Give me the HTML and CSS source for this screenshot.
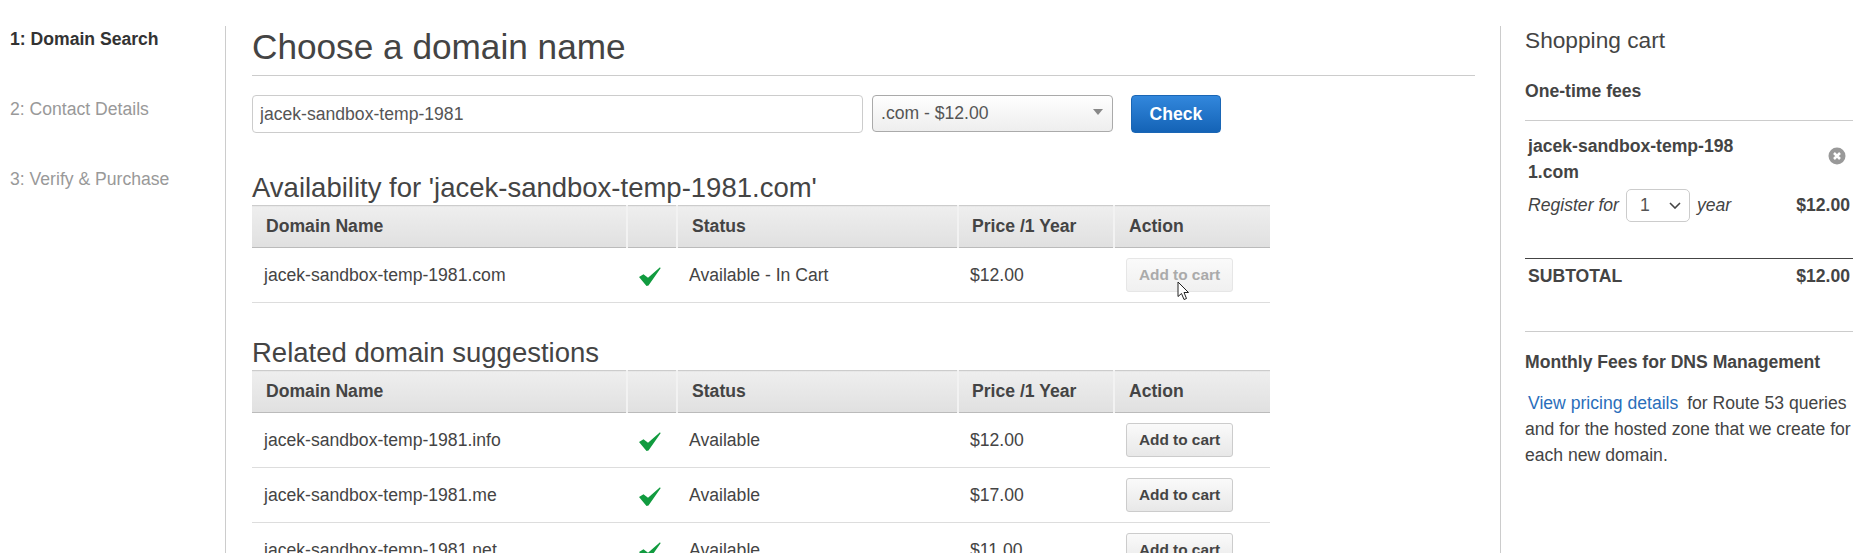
FILE: index.html
```html
<!DOCTYPE html>
<html>
<head>
  <title>Choose a domain name</title>
  <link rel="stylesheet" href="styles.css">
</head>
<body>
  <div class="page">
    <!-- Steps -->
    <ul class="steps">
      <li class="step current">1: Domain Search</li>
      <li class="step">2: Contact Details</li>
      <li class="step">3: Verify &amp; Purchase</li>
    </ul>

    <div class="main">
      <h1 class="title">Choose a domain name</h1>

      <div class="search-row">
        <input class="domain-input" type="text" value="jacek-sandbox-temp-1981">
        <div class="tld-select">
          <span>.com - $12.00</span>
          <span class="tld-arrow"></span>
        </div>
        <button class="check-btn">Check</button>
      </div>

      <h2 class="section-title first">Availability for 'jacek-sandbox-temp-1981.com'</h2>
      <table class="domains">
        <thead>
          <tr>
            <th class="col-name">Domain Name</th>
            <th class="col-icon"></th>
            <th class="col-status">Status</th>
            <th class="col-price">Price /1 Year</th>
            <th class="col-action">Action</th>
          </tr>
        </thead>
        <tbody>
          <tr>
            <td>jacek-sandbox-temp-1981.com</td>
            <td class="check-cell"><svg class="tick" viewBox="0 0 22 19"><path d="M0 10 L4.5 7.3 L9 10.7 L21 0.3 L21.6 1.2 L9.5 18.5 L7.5 19 Z"/></svg></td>
            <td>Available - In Cart</td>
            <td>$12.00</td>
            <td class="action-cell">
              <button class="cart-btn" disabled>Add to cart</button>
              <svg class="pointer" viewBox="0 0 13 20"><path d="M1 1 V15.5 L4.5 12.5 L7 18.5 L9.5 17.5 L7 11.5 L11.5 11.5 Z"/></svg>
            </td>
          </tr>
        </tbody>
      </table>

      <h2 class="section-title">Related domain suggestions</h2>
      <table class="domains">
        <thead>
          <tr>
            <th class="col-name">Domain Name</th>
            <th class="col-icon"></th>
            <th class="col-status">Status</th>
            <th class="col-price">Price /1 Year</th>
            <th class="col-action">Action</th>
          </tr>
        </thead>
        <tbody>
          <tr>
            <td>jacek-sandbox-temp-1981.info</td>
            <td class="check-cell"><svg class="tick" viewBox="0 0 22 19"><path d="M0 10 L4.5 7.3 L9 10.7 L21 0.3 L21.6 1.2 L9.5 18.5 L7.5 19 Z"/></svg></td>
            <td>Available</td>
            <td>$12.00</td>
            <td class="action-cell"><button class="cart-btn">Add to cart</button></td>
          </tr>
          <tr>
            <td>jacek-sandbox-temp-1981.me</td>
            <td class="check-cell"><svg class="tick" viewBox="0 0 22 19"><path d="M0 10 L4.5 7.3 L9 10.7 L21 0.3 L21.6 1.2 L9.5 18.5 L7.5 19 Z"/></svg></td>
            <td>Available</td>
            <td>$17.00</td>
            <td class="action-cell"><button class="cart-btn">Add to cart</button></td>
          </tr>
          <tr>
            <td>jacek-sandbox-temp-1981.net</td>
            <td class="check-cell"><svg class="tick" viewBox="0 0 22 19"><path d="M0 10 L4.5 7.3 L9 10.7 L21 0.3 L21.6 1.2 L9.5 18.5 L7.5 19 Z"/></svg></td>
            <td>Available</td>
            <td>$11.00</td>
            <td class="action-cell"><button class="cart-btn">Add to cart</button></td>
          </tr>
        </tbody>
      </table>
    </div>

    <!-- Shopping cart -->
    <div class="cart">
      <h3 class="cart-title">Shopping cart</h3>
      <div class="fees-title">One-time fees</div>

      <div class="cart-item">
        <div class="item-top">
          <div class="item-name">jacek-sandbox-temp-1981.com</div>
          <svg class="remove" viewBox="0 0 18 18">
            <circle cx="9" cy="9" r="8.5"/>
            <path d="M6 6 L12 12 M12 6 L6 12"/>
          </svg>
        </div>
        <div class="item-term">
          <em>Register for</em>
          <div class="year-select">
            <span>1</span>
            <svg class="chevron" viewBox="0 0 12 7"><path d="M1 1 L6 6 L11 1"/></svg>
          </div>
          <em>year</em>
          <strong class="item-price">$12.00</strong>
        </div>
      </div>

      <div class="subtotal">
        <span>SUBTOTAL</span>
        <span>$12.00</span>
      </div>

      <div class="monthly">
        <div class="monthly-title">Monthly Fees for DNS Management</div>
        <p class="monthly-text"><a class="pricing-link" href="#">View pricing details</a> for Route 53 queries and for the hosted zone that we create for each new domain.</p>
      </div>
    </div>
  </div>
</body>
</html>
```

FILE: styles.css
```css
html, body {
  height: 553px;
  overflow: hidden;
}

body {
  margin: 0;
  background-color: #fff;
  color: #444;
  font-family: "Liberation Sans", Arial, sans-serif;
  font-size: 17.6px;
}

.page {
  display: flex;
  padding-top: 26px;
  height: 527px;
}

/* Steps */
.steps {
  list-style-type: none;
  margin: 0;
  padding: 4px 0 0 10px;
  width: 215px;
  border-right: 1px solid #ccc;
}

.step {
  height: 70px;
  line-height: 18px;
  color: #999;
}

.step.current {
  color: #333;
  font-weight: bold;
}

/* Main column */
.main {
  width: 1223px;
  padding: 0 25px 0 26px;
  border-right: 1px solid #ccc;
}

.title {
  margin: 0;
  height: 49px;
  line-height: 42px;
  font-size: 35.2px;
  font-weight: normal;
  border-bottom: 1px solid #ccc;
}

.search-row {
  display: flex;
  margin-top: 19px;
}

.domain-input {
  box-sizing: border-box;
  width: 611px;
  height: 38px;
  padding: 0 7px;
  border: 1px solid #ccc;
  border-radius: 4px;
  color: #555;
  font-family: inherit;
  font-size: 17.6px;
}

.tld-select {
  box-sizing: border-box;
  display: flex;
  justify-content: space-between;
  align-items: center;
  width: 241px;
  height: 37px;
  margin-left: 9px;
  padding: 0 9px 1px 8px;
  border: 1px solid #aaa;
  border-radius: 4px;
  background: linear-gradient(#fff, #f6f6f6 50%, #eee);
  color: #555;
}

.tld-arrow {
  width: 0;
  height: 0;
  margin-bottom: 3px;
  border-left: 5px solid transparent;
  border-right: 5px solid transparent;
  border-top: 6px solid #888;
}

.check-btn {
  width: 90px;
  height: 38px;
  margin-left: 18px;
  border: 1px solid #1a66b5;
  border-radius: 4px;
  background: linear-gradient(#3287dc, #1463b6);
  color: #fff;
  font-family: inherit;
  font-size: 17.6px;
  font-weight: bold;
}

.section-title {
  margin: 33px 0 0;
  height: 34px;
  line-height: 34px;
  font-size: 27.5px;
  font-weight: normal;
}

.section-title.first {
  margin-top: 38px;
}

/* Domain tables */
.domains {
  width: 1018px;
  table-layout: fixed;
  border-collapse: collapse;
}

.domains th {
  box-sizing: border-box;
  height: 42px;
  padding: 0 0 0 14px;
  border-top: 1px solid #ccc;
  border-bottom: 1px solid #bbb;
  border-right: 2px solid #f2f2f2;
  background: linear-gradient(#eee, #e0e0e0);
  color: #444;
  text-align: left;
  font-weight: bold;
}

.domains th:last-child {
  border-right: none;
}

.col-name { width: 375px; }
.col-icon { width: 50px; }
.col-status { width: 281px; }
.col-price { width: 156px; }
.col-action { width: 156px; }

.domains th.col-price {
  padding-left: 13px;
}

.domains td {
  height: 54px;
  padding: 0 0 0 12px;
  border-bottom: 1px solid #ddd;
}

.check-cell svg {
  display: block;
  margin-top: 2px;
}

.tick {
  width: 22px;
  height: 19px;
  fill: #119b3f;
}

.action-cell {
  position: relative;
}

.cart-btn {
  display: block;
  width: 107px;
  height: 34px;
  padding: 0;
  border: 1px solid #ccc;
  border-radius: 3px;
  background: linear-gradient(#fafafa, #e8e8e8);
  color: #444;
  font-family: inherit;
  font-size: 15.4px;
  font-weight: bold;
}

.cart-btn:disabled {
  border-color: #e6e6e6;
  background: linear-gradient(#fafafa, #f0f0f0);
  color: #aaa;
}

/* mouse pointer in the screenshot, sits over the button */
.pointer {
  position: absolute;
  left: 63px;
  top: 33px;
  width: 13px;
  height: 20px;
  fill: #fff;
  stroke: #222;
  stroke-width: 1;
}

/* Cart */
.cart {
  width: 328px;
  margin-left: 24px;
}

.cart-title {
  margin: 0;
  height: 28px;
  line-height: 28px;
  font-size: 22.7px;
  font-weight: normal;
}

.fees-title {
  margin-top: 28px;
  line-height: 18px;
  font-weight: bold;
}

.cart-item {
  margin-top: 20px;
  height: 139px;
  padding: 0 3px;
  border-top: 1px solid #ccc;
  border-bottom: 1px solid #444;
  box-sizing: border-box;
}

.item-top {
  display: flex;
  justify-content: space-between;
  align-items: center;
  padding-top: 12px;
}

.item-name {
  width: 210px;
  line-height: 26px;
  font-weight: bold;
  word-break: break-all;
}

.remove {
  width: 18px;
  height: 18px;
  margin: 0 4px 7px 0;
}

.remove circle {
  fill: #999;
}

.remove path {
  stroke: #fff;
  stroke-width: 2.5;
}

.item-term {
  display: flex;
  align-items: center;
  margin-top: 4px;
}

.year-select {
  box-sizing: border-box;
  display: flex;
  justify-content: space-between;
  align-items: center;
  width: 64px;
  height: 33px;
  margin: 0 7px;
  padding: 0 8px 0 13px;
  border: 1px solid #ccc;
  border-radius: 5px;
  color: #555;
}

.chevron {
  width: 12px;
  height: 7px;
  fill: none;
  stroke: #444;
  stroke-width: 1.6;
}

.item-price {
  margin-left: auto;
}

.subtotal {
  display: flex;
  justify-content: space-between;
  padding: 8px 3px 0;
  line-height: 18px;
  font-weight: bold;
}

.monthly {
  margin-top: 46px;
  border-top: 1px solid #ccc;
  padding-top: 21px;
}

.monthly-title {
  line-height: 18px;
  font-weight: bold;
}

.monthly-text {
  margin: 19px 0 0;
  line-height: 26px;
}

.pricing-link {
  margin: 0 4px 0 3px;
  color: #2a6ebb;
  text-decoration: none;
}
```
